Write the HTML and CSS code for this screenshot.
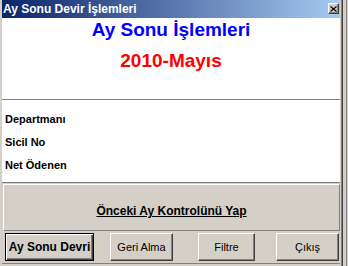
FILE: index.html
```html
<!DOCTYPE html>
<html lang="tr">
<head>
    <meta charset="UTF-8">
    <title>Ay Sonu Devir İşlemleri</title>
    <link rel="stylesheet" href="styles.css">
</head>
<body>
    <div class="desk">
        <div class="window">
            <div class="titlebar">
                <span class="title">Ay Sonu Devir İşlemleri</span>
                <span class="close-btn">
                    <svg width="7" height="6" viewBox="0 0 7 6">
                        <path d="M0.5 0.5 L6.5 5.5 M6.5 0.5 L0.5 5.5" stroke="#000" stroke-width="1.2" fill="none"/>
                    </svg>
                </span>
            </div>

            <div class="header">
                <div class="head-main">Ay Sonu İşlemleri</div>
                <div class="head-period">2010-Mayıs</div>
            </div>

            <div class="info">
                <div class="info-row">Departmanı</div>
                <div class="info-row">Sicil No</div>
                <div class="info-row">Net Ödenen</div>
            </div>

            <div class="check-panel">
                <span class="check-link">Önceki Ay Kontrolünü Yap</span>
            </div>

            <div class="actions">
                <button class="btn btn-default">Ay Sonu Devri</button>
                <button class="btn btn-undo">Geri Alma</button>
                <button class="btn btn-filter">Filtre</button>
                <button class="btn btn-exit">Çıkış</button>
            </div>
        </div>
        <div class="edge"></div>
        <div class="edge-far"></div>
    </div>
</body>
</html>
```

FILE: styles.css
```css
body {
    margin: 0;
    background-color: #d4d0c8;
    font-family: "Liberation Sans", Arial, sans-serif;
}
.desk {
    display: flex;
    width: 348px;
    height: 266px;
    overflow: hidden;
}
.window {
    width: 341px;
    height: 266px;
    box-sizing: border-box;
    border-left: 2px solid #d4d0c8;
    border-right: 1px solid #d4d0c8;
    display: flex;
    flex-direction: column;
}
.edge {
    width: 0;
    border-left: 1px solid #808080;
    border-right: 1px solid #404040;
}
.edge-far {
    width: 1px;
    margin-left: 3px;
    background-color: #808080;
}
.titlebar {
    height: 18px;
    display: flex;
    align-items: center;
    padding-left: 1px;
    background: linear-gradient(to right, #0a246a, #a6caf0);
}
.title {
    color: white;
    font-weight: bold;
    font-size: 12px;
    line-height: 18px;
    white-space: nowrap;
}
.close-btn {
    margin-left: auto;
    margin-right: 1px;
    align-self: flex-start;
    margin-top: 3px;
    width: 11px;
    height: 11px;
    box-sizing: border-box;
    background-color: #d4d0c8;
    border: 1px solid;
    border-color: #fff #404040 #404040 #fff;
    box-shadow: inset -1px -1px #808080;
    display: flex;
    align-items: center;
    justify-content: center;
}
.close-btn svg {
    display: block;
}
.header {
    height: 82px;
    box-sizing: border-box;
    padding-top: 1px;
    background-color: white;
    border-bottom: 1px solid #808080;
    text-align: center;
    font-weight: bold;
    font-size: 19px;
}
.head-main {
    color: #0000ff;
    line-height: 22px;
}
.head-period {
    color: #ff0000;
    line-height: 22px;
    margin-top: 9px;
}
.info {
    height: 83px;
    box-sizing: border-box;
    padding: 8px 3px 0;
    background-color: white;
    border-bottom: 1px solid #808080;
}
.info-row {
    font-size: 11px;
    font-weight: bold;
    line-height: 23px;
    color: #000;
}
.check-panel {
    height: 47px;
    box-sizing: border-box;
    margin: 1px 0 0 1px;
    padding-top: 16px;
    border: 1px solid;
    border-color: #fff #808080 #808080 #fff;
    text-align: center;
}
.check-link {
    font-size: 12px;
    font-weight: bold;
    line-height: 14px;
    text-decoration: underline;
    color: #000;
}
.actions {
    height: 33px;
    box-sizing: border-box;
    padding: 2px 0 0 3px;
    display: flex;
    align-items: flex-start;
    border-bottom: 1px solid #808080;
}
.btn {
    height: 28px;
    padding: 0;
    box-sizing: border-box;
    background-color: #d4d0c8;
    border: 1px solid;
    border-color: #fff #404040 #404040 #fff;
    box-shadow: inset -1px -1px #808080;
    font-family: "Liberation Sans", Arial, sans-serif;
    font-size: 11px;
    color: #000;
    cursor: pointer;
}
.btn-default {
    width: 89px;
    border: 1px solid #000;
    box-shadow: inset 1px 1px #fff, inset -1px -1px #404040, inset -2px -2px #808080;
    font-weight: bold;
    font-size: 12px;
}
.btn-undo {
    width: 63px;
    margin-left: 16px;
}
.btn-filter {
    width: 57px;
    margin-left: 25px;
}
.btn-exit {
    width: 63px;
    margin-left: 21px;
}
```
